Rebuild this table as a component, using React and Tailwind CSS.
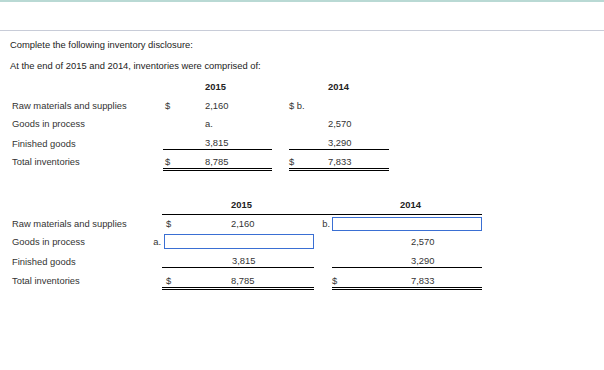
import React from "react";

const font = { fontFamily: '"Liberation Sans", Arial, sans-serif' };

function Cell({ dollar, dw, pl = "", value, extra = "", children }) {
  return (
    <div className={`flex ${extra}`}>
      {children ? (
        children
      ) : (
        <>
          <span className={`${pl} ${dw} shrink-0`}>{dollar}</span>
          <span>{value}</span>
        </>
      )}
    </div>
  );
}

export default function App() {
  const t1c1 = "pl-[2px] w-[42px]";
  const t1c2 = "w-[39px]";
  const t2c1 = "pl-[4px] w-[69px]";
  const t2c2 = "w-[79px]";
  return (
    <div className="w-[604px] h-[370px] bg-white text-[9.4px] leading-[12px] text-[#333]" style={font}>
      <div className="h-[2px] bg-[#b9d9d4]" />
      <div className="h-[29px] border-b border-[#c8ccd8]" />
      <div className="px-[10px]">
        <div className="mt-[8px] text-[#222]">Complete the following inventory disclosure:</div>
        <div className="mt-[9px] text-[#222]">At the end of 2015 and 2014, inventories were comprised of:</div>

        {/* Table 1 */}
        <div className="mt-[6px] ml-[2px] grid grid-cols-[151px_109px_17px_100px] grid-rows-[18px_19px_18px_17px_21px]">
          <div />
          <div className="flex items-center pl-[42px] font-bold text-[#222]">2015</div>
          <div />
          <div className="flex items-center pl-[39px] font-bold text-[#222]">2014</div>

          <div className="flex items-center">Raw materials and supplies</div>
          <div className="flex items-center"><span className="pl-[2px] w-[42px]">$</span><span>2,160</span></div>
          <div />
          <div className="flex items-center">$ b.</div>

          <div className="flex items-center">Goods in process</div>
          <div className="flex items-center"><span className="w-[42px]" /><span>a.</span></div>
          <div />
          <div className="flex items-center"><span className="w-[39px]" /><span>2,570</span></div>

          <div className="flex items-end">Finished goods</div>
          <div className="flex items-end border-b border-black"><span className="w-[42px]" /><span>3,815</span></div>
          <div />
          <div className="flex items-end border-b border-black"><span className="w-[39px]" /><span>3,290</span></div>

          <div className="flex items-end border-b-[3px] border-transparent">Total inventories</div>
          <div className="flex items-end border-b-[3px] border-double border-black"><span className="pl-[2px] w-[42px]">$</span><span>8,785</span></div>
          <div />
          <div className="flex items-end border-b-[3px] border-double border-black"><span className="w-[39px]">$</span><span>7,833</span></div>
        </div>

        {/* Table 2 */}
        <div className="mt-[25px] ml-[2px] grid grid-cols-[150px_152px_18px_150px] grid-rows-[19px_17px_19px_17px_22px]">
          <div />
          <div className="flex items-center pl-[69px] font-bold text-[#222] border-b border-black">2015</div>
          <div className="border-b border-black" />
          <div className="flex items-center pl-[68px] font-bold text-[#222] border-b border-black">2014</div>

          <div className="flex items-center">Raw materials and supplies</div>
          <div className="flex items-center"><span className="pl-[4px] w-[69px]">$</span><span>2,160</span></div>
          <div className="flex items-center justify-end pr-[2px]">b.</div>
          <div className="flex items-center">
            <div className="w-[150px] h-[14px] border border-[#3a6fd3] bg-white" />
          </div>

          <div className="flex items-center justify-between">
            <span>Goods in process</span>
            <span className="pr-[1px]">a.</span>
          </div>
          <div className="flex items-center pl-[2px]">
            <div className="w-[150px] h-[15px] border border-[#3a6fd3] bg-white" />
          </div>
          <div />
          <div className="flex items-center"><span className="w-[79px]" /><span>2,570</span></div>

          <div className="flex items-end">Finished goods</div>
          <div className="flex items-end border-b border-black"><span className="w-[70px]" /><span>3,815</span></div>
          <div />
          <div className="flex items-end border-b border-black"><span className="w-[79px]" /><span>3,290</span></div>

          <div className="flex items-end border-b-[3px] border-transparent">Total inventories</div>
          <div className="flex items-end border-b-[3px] border-double border-black"><span className="pl-[4px] w-[69px]">$</span><span>8,785</span></div>
          <div />
          <div className="flex items-end border-b-[3px] border-double border-black"><span className="w-[79px]">$</span><span>7,833</span></div>
        </div>
      </div>
    </div>
  );
}
